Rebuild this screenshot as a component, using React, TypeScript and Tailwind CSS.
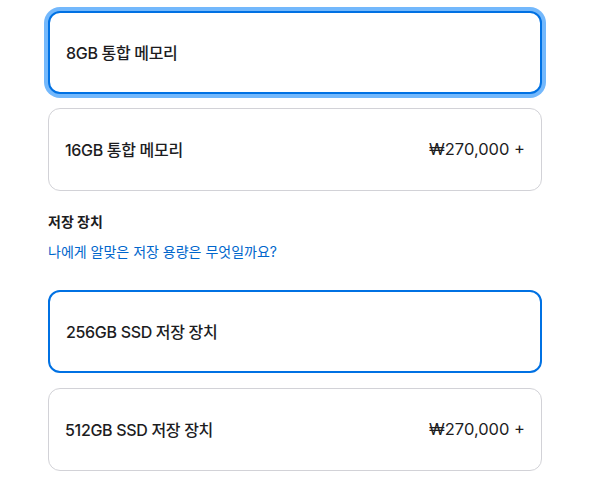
import React, { useState } from 'react';

interface Option {
  id: string;
  label: string;
  price?: string;
}

const memoryOptions: Option[] = [
  { id: 'mem-8', label: '8GB 통합 메모리' },
  { id: 'mem-16', label: '16GB 통합 메모리', price: '₩270,000 +' },
];

const storageOptions: Option[] = [
  { id: 'ssd-256', label: '256GB SSD 저장 장치' },
  { id: 'ssd-512', label: '512GB SSD 저장 장치', price: '₩270,000 +' },
];

function OptionCard({
  option,
  selected,
  focused,
  onSelect,
}: {
  option: Option;
  selected: boolean;
  focused?: boolean;
  onSelect: () => void;
}) {
  return (
    <button
      onClick={onSelect}
      className={`w-full h-[83px] flex items-center justify-between px-4 rounded-xl bg-white text-left text-[#1d1d1f] ${
        selected ? 'border-2 border-[#0071e3]' : 'border border-[#d2d2d7]'
      } ${focused ? 'shadow-[0_0_0_4px_rgba(0,125,250,0.55)]' : ''}`}
    >
      <span className="text-[16px] font-medium tracking-[-0.02em]">{option.label}</span>
      {option.price && <span className="text-[16.5px]">{option.price}</span>}
    </button>
  );
}

export default function App() {
  const [memory, setMemory] = useState('mem-8');
  const [storage, setStorage] = useState('ssd-256');

  return (
    <div
      className="min-h-screen bg-white pl-12 pr-[58px] pt-[11px]"
      style={{ fontFamily: 'Inter, "Noto Sans CJK KR", sans-serif' }}
    >
      {/* Memory */}
      <div className="flex flex-col gap-[14px]">
        {memoryOptions.map(o => (
          <OptionCard
            key={o.id}
            option={o}
            selected={memory === o.id}
            focused={o.id === 'mem-8'}
            onSelect={() => setMemory(o.id)}
          />
        ))}
      </div>

      {/* Storage */}
      <h3 className="mt-[21px] text-[14px] leading-5 font-bold text-[#1d1d1f]">저장 장치</h3>
      <a href="#" className="block mt-[10px] text-[14px] leading-5 text-[#0066cc]">
        나에게 알맞은 저장 용량은 무엇일까요?
      </a>

      <div className="mt-[28px] flex flex-col gap-[15px]">
        {storageOptions.map(o => (
          <OptionCard
            key={o.id}
            option={o}
            selected={storage === o.id}
            onSelect={() => setStorage(o.id)}
          />
        ))}
      </div>
    </div>
  );
}
